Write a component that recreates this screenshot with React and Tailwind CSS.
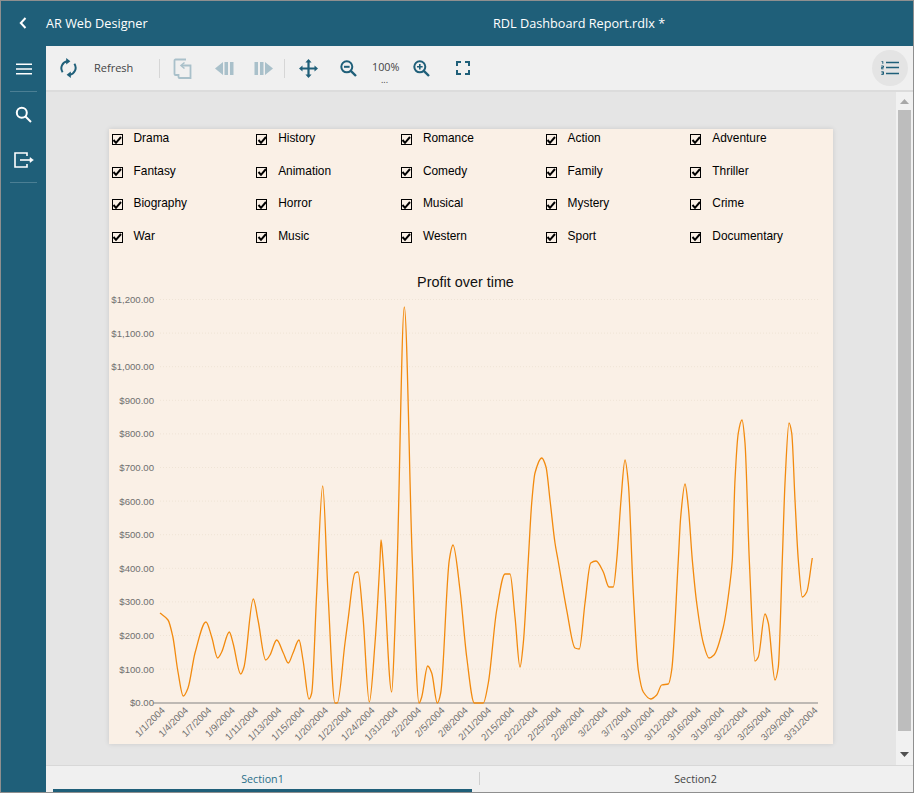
const genres = [
  'Drama', 'History', 'Romance', 'Action', 'Adventure',
  'Fantasy', 'Animation', 'Comedy', 'Family', 'Thriller',
  'Biography', 'Horror', 'Musical', 'Mystery', 'Crime',
  'War', 'Music', 'Western', 'Sport', 'Documentary',
]

const yLabels = ['$1,200.00', '$1,100.00', '$1,000.00', '$900.00', '$800.00', '$700.00', '$600.00', '$500.00', '$400.00', '$300.00', '$200.00', '$100.00', '$0.00']

const xLabels = [
  '1/1/2004', '1/4/2004', '1/7/2004', '1/9/2004', '1/11/2004', '1/13/2004', '1/15/2004', '1/20/2004', '1/22/2004', '1/24/2004',
  '1/31/2004', '2/2/2004', '2/5/2004', '2/8/2004', '2/11/2004', '2/15/2004', '2/22/2004', '2/25/2004', '2/28/2004', '3/2/2004',
  '3/7/2004', '3/10/2004', '3/12/2004', '3/16/2004', '3/19/2004', '3/22/2004', '3/25/2004', '3/29/2004', '3/31/2004',
]

const profit = [
  [160, 613], [168, 620], [172.7, 636], [178, 672], [183.3, 696], [188, 688], [195, 653], [206, 622], [211.7, 637], [217.7, 658],
  [221.7, 652], [229.3, 632], [233, 643], [240.7, 674], [244, 667], [253.3, 599], [258, 620], [265.7, 660], [270, 655], [276.7, 640],
  [283.3, 653], [288.3, 663], [293, 653], [299, 640], [303, 660], [309, 699], [311.7, 693], [316.7, 593], [322.7, 486], [328, 593],
  [335, 703], [337.3, 703], [345, 643], [348, 620], [355, 573], [358, 572], [363, 617], [369.3, 702], [375, 643], [380, 560],
  [381, 540], [383, 560], [391.7, 692], [395, 627], [397.3, 560], [404.3, 307], [412.3, 560], [419, 703], [421.7, 697], [427.7, 666],
  [431.7, 673], [437.3, 703], [440.7, 693], [449.3, 560], [453, 545], [460, 590], [466.7, 657], [474.3, 703], [483.3, 703], [488.3, 683],
  [496.7, 610], [505, 574], [510, 574], [515, 617], [520, 667], [523.3, 643], [528.3, 560], [531.7, 503], [535, 473], [541.7, 458],
  [546, 467], [550, 500], [555, 543], [558, 560], [566.7, 610], [575, 648], [579.3, 649], [585, 603], [590.7, 563], [596, 561],
  [603.3, 572], [609, 587], [613.3, 587], [616.7, 560], [621, 500], [625, 460], [628.3, 483], [633.3, 593], [638.3, 670], [643.3, 692],
  [650.7, 699], [656.7, 695], [661.7, 685], [668.3, 684], [671.7, 670], [678.3, 560], [680.7, 517], [685, 484], [688.3, 507], [692.3, 560],
  [696.7, 603], [703.3, 643], [709, 658], [714, 655], [723.3, 627], [730, 583], [732.3, 560], [735, 480], [738.3, 433], [742, 420],
  [745, 443], [749.3, 560], [755, 661], [758.3, 657], [765, 614], [768.3, 623], [775, 680], [778.3, 667], [782.3, 560], [785, 483],
  [789, 423], [791.7, 433], [795, 500], [798.3, 560], [802.3, 597], [806.7, 592], [812.3, 558],
]

// monotone cubic through the traced points, so peaks don't overshoot
function smoothPath(pts) {
  const slope = (a, b) => (b[1] - a[1]) / (b[0] - a[0])
  const m = pts.map((p, i) => {
    if (i === 0) return slope(p, pts[1])
    if (i === pts.length - 1) return slope(pts[i - 1], p)
    const s0 = slope(pts[i - 1], p)
    const s1 = slope(p, pts[i + 1])
    return s0 * s1 <= 0 ? 0 : (2 * s0 * s1) / (s0 + s1)
  })
  let d = `M${pts[0][0]} ${pts[0][1]}`
  for (let i = 0; i < pts.length - 1; i++) {
    const [x0, y0] = pts[i]
    const [x1, y1] = pts[i + 1]
    const h = (x1 - x0) / 3
    d += `C${(x0 + h).toFixed(1)} ${(y0 + m[i] * h).toFixed(1)} ${(x1 - h).toFixed(1)} ${(y1 - m[i + 1] * h).toFixed(1)} ${x1} ${y1}`
  }
  return d
}

function CheckItem({ label }) {
  return (
    <div className="flex items-center h-[20px] pl-[2.500px]">
      <span className="w-[11px] h-[11px] border-[1.500px] border-black flex items-center justify-center mt-[1px] shrink-0">
        <svg width="10" height="10" viewBox="0 0 10 10" fill="none" stroke="#000" strokeWidth="2" className="shrink-0">
          <path d="M1.500 5 4 7.800 9 2" />
        </svg>
      </span>
      <span className="ml-[11px] text-[11.900px] text-black">{label}</span>
    </div>
  )
}

function ProfitChart() {
  return (
    <svg width="724" height="489" viewBox="109 255 724 489" className="block" fontFamily="'Liberation Sans', Arial, sans-serif">
      <text x="465.500" y="287" textAnchor="middle" fontSize="14.400" fill="#111">Profit over time</text>
      {yLabels.map((label, i) => {
        const y = 299.500 + i * 33.600
        return (
          <g key={label}>
            {i < 12 && <line x1="160" x2="818" y1={y} y2={y} stroke="#efe4d6" strokeWidth="1" strokeDasharray="1 2" />}
            <text x="154" y={y + 3.500} textAnchor="end" fontSize="9.600" fill="#6f6f6f">{label}</text>
          </g>
        )
      })}
      <line x1="153" x2="818" y1="703" y2="703" stroke="#828282" strokeWidth="1" />
      {xLabels.map((label, i) => {
        const x = 165.500 + i * 23.310
        return (
          <text key={label} x={x} y="711" textAnchor="end" fontSize="9.600" fill="#6f6f6f" transform={`rotate(-45 ${x} 711)`}>{label}</text>
        )
      })}
      <path d={smoothPath(profit)} fill="none" stroke="#f28a0e" strokeWidth="1.300" strokeLinejoin="round" />
    </svg>
  )
}

function Slot({ className = '', children }) {
  return <div className={`w-[36px] h-[36px] flex items-center justify-center shrink-0 ${className}`}>{children}</div>
}

const teal = '#1f5f79'
const faded = '#a9c0ca'

export default function App() {
  return (
    <div className="w-[914px] h-[793px] border border-[#8f8f8f] flex flex-col overflow-hidden bg-[#1f5f79] font-['Open_Sans',sans-serif]">
      <header className="h-[45px] shrink-0 flex items-center text-white text-[12.700px]">
        <div className="w-[492px] shrink-0 flex items-center">
          <svg className="ml-[17px]" width="10" height="14" viewBox="0 0 10 14" fill="none" stroke="#fff" strokeWidth="2">
            <path d="M7.500 2 2.800 7l4.700 5" />
          </svg>
          <span className="ml-[18px]">AR Web Designer</span>
        </div>
        <span>RDL Dashboard Report.rdlx *</span>
      </header>

      <div className="flex-1 flex min-h-0">
        <aside className="w-[45px] shrink-0 flex flex-col items-center">
          <div className="h-[46px] w-[27px] flex items-center justify-center border-b border-[#4b7f94]">
            <svg width="16" height="12" viewBox="0 0 16 12" stroke="#fff" strokeWidth="1.600">
              <path d="M0 1.200h16M0 6h16M0 10.800h16" />
            </svg>
          </div>
          <div className="h-[45px] w-[27px] flex items-center justify-center">
            <svg width="17" height="17" viewBox="0 0 17 17" fill="none" stroke="#fff" strokeWidth="2">
              <circle cx="6.800" cy="6.800" r="5" />
              <path d="M10.500 10.500 16 16" />
            </svg>
          </div>
          <div className="h-[46px] w-[27px] flex items-center justify-center border-b border-[#4b7f94]">
            <svg width="20" height="16" viewBox="0 0 20 16" fill="none" stroke="#fff" strokeWidth="1.600">
              <path d="M13 4V1H1v14h12v-3" />
              <path d="M6 8h12" />
              <path d="M16 5.600 19.400 8 16 10.400z" fill="#fff" strokeWidth="0.600" />
            </svg>
          </div>
        </aside>

        <main className="flex-1 min-w-0 flex flex-col bg-[#e5e5e5]">
          <div className="h-[46px] shrink-0 flex items-center pl-[4px] bg-[#f0f0f0] border-b-2 border-[#dcdcdc] text-[11px] text-[#444]">
            <Slot>
              <svg width="17" height="20" viewBox="0 0 17 20" fill="none" stroke={teal} strokeWidth="2">
                <path d="M2.600 14.200A7 7 0 0 1 7.500 3.300" />
                <path d="M6.200 0 10.400 3.200 6.200 6.400z" fill={teal} stroke="none" />
                <path d="M14.400 5.800A7 7 0 0 1 9.500 16.700" />
                <path d="M10.800 20 6.600 16.800 10.800 13.600z" fill={teal} stroke="none" />
              </svg>
            </Slot>
            <span className="ml-[8px] w-[39px]">Refresh</span>
            <div className="ml-[26px] w-px h-[19px] bg-[#d6d6d6]" />
            <Slot className="ml-[4px]">
              <svg width="19" height="21" viewBox="0 0 19 21" fill="none" stroke={faded} strokeWidth="1.800">
                <path d="M13 1.500H2.500a1 1 0 0 0-1 1V16a1 1 0 0 0 1 1H5" />
                <path d="M9 7.500h8.500V20H6.500a1 1 0 0 1-1-1v-3" />
                <path d="M11.500 4.500 8 7.500l3.500 3" strokeWidth="1.500" />
              </svg>
            </Slot>
            <Slot className="ml-[6px]">
              <svg width="19" height="13" viewBox="0 0 19 13" fill={faded}>
                <path d="M8 0v13L0 6.500zM9.500 0h3.500v13H9.500zM15 0h3.500v13H15z" />
              </svg>
            </Slot>
            <Slot className="ml-[3px]">
              <svg width="19" height="13" viewBox="0 0 19 13" fill={faded}>
                <path d="M11 0v13l8-6.500zM0.500 0H4v13H0.500zM6 0h3.500v13H6z" />
              </svg>
            </Slot>
            <div className="ml-[3px] w-px h-[19px] bg-[#d6d6d6]" />
            <Slot className="ml-[5px]">
              <svg width="19" height="19" viewBox="0 0 19 19" fill={teal}>
                <path d="M9.500 0 12.600 3.500H10.600V8.400H15.500V6.400L19 9.500 15.500 12.600V10.600H10.600V15.500H12.600L9.500 19 6.400 15.500H8.400V10.600H3.500V12.600L0 9.500 3.500 6.400V8.400H8.400V3.500H6.400z" />
              </svg>
            </Slot>
            <Slot className="ml-[4px]">
              <svg width="17" height="17" viewBox="0 0 17 17" fill="none" stroke={teal} strokeWidth="2">
                <circle cx="6.800" cy="6.800" r="5.500" />
                <path d="M4 6.800h5.600" />
                <path d="M10.800 10.800 16 16" strokeWidth="2.400" />
              </svg>
            </Slot>
            <div className="ml-[5px] w-[28px] h-[36px] relative shrink-0 leading-none">
              <span className="absolute left-[1px] top-[12px] text-[10.800px]">100%</span>
              <span className="absolute left-[10px] top-[25px] text-[9px]">...</span>
            </div>
            <Slot className="ml-[4px]">
              <svg width="17" height="17" viewBox="0 0 17 17" fill="none" stroke={teal} strokeWidth="2">
                <circle cx="6.800" cy="6.800" r="5.500" />
                <path d="M4 6.800h5.600M6.800 4v5.600" strokeWidth="1.600" />
                <path d="M10.800 10.800 16 16" strokeWidth="2.400" />
              </svg>
            </Slot>
            <Slot className="ml-[6px]">
              <svg width="14" height="14" viewBox="0 0 14 14" fill="none" stroke={teal} strokeWidth="2">
                <path d="M1 5V1h4M9 1h4v4M13 9v4H9M5 13H1V9" />
              </svg>
            </Slot>
            <div className="flex-1" />
            <div className="w-[36px] h-[36px] mr-[5px] rounded-full bg-[#e4e4e4] flex items-center justify-center">
              <svg width="18" height="14" viewBox="0 0 18 14" stroke={teal} fill="none">
                <path d="M5 1.500h13M5 6.500h13M5 12.500h13" strokeWidth="1.500" />
                <path d="M0.500 0.300h1.300v2.500M0.300 5h2.200v1.400H0.300v1.400h2.200M0.300 10.800h2.200v2.600H0.300M0.800 12h1.700" strokeWidth="1" />
              </svg>
            </div>
          </div>

          <div className="flex-1 min-h-0 flex">
            <div className="flex-1 min-w-0 pl-[63px] pt-[37px]">
              <div className="w-[724px] h-[615px] bg-[#faf0e6] shadow-[0_0_5px_rgba(0,0,0,0.12)] font-['Liberation_Sans',Arial,sans-serif]">
                <div className="grid grid-cols-5 gap-y-[12.500px] w-[723.500px] h-[126px] content-start">
                  {genres.map(g => <CheckItem key={g} label={g} />)}
                </div>
                <ProfitChart />
              </div>
            </div>
            <div className="w-[17px] shrink-0 bg-[#f1f1f1] flex flex-col items-center">
              <svg className="mt-[7px] shrink-0" width="9" height="5" viewBox="0 0 9 5" fill="#a8a8a8">
                <path d="M4.500 0 9 5H0z" />
              </svg>
              <div className="w-[13px] h-[621px] mt-[6px] bg-[#bdbdbd] shrink-0" />
              <svg className="mt-[21px] shrink-0" width="9" height="5" viewBox="0 0 9 5" fill="#505050">
                <path d="M0 0h9L4.500 5z" />
              </svg>
            </div>
          </div>

          <div className="h-[27px] shrink-0 bg-[#f0f0f0] border-t border-[#d8d8d8] flex items-stretch px-[7px] text-[10.700px]">
            <div className="w-[419px] flex items-center justify-center border-b-[3px] border-[#1f5f79] text-[#2a6f8a] pt-[3px]">Section1</div>
            <div className="w-px h-[13px] bg-[#cfcfcf] ml-[7px] mt-[6px]" />
            <div className="flex-1 flex items-center justify-center text-[#444] pl-[5px]">Section2</div>
          </div>
        </main>
      </div>
    </div>
  )
}
